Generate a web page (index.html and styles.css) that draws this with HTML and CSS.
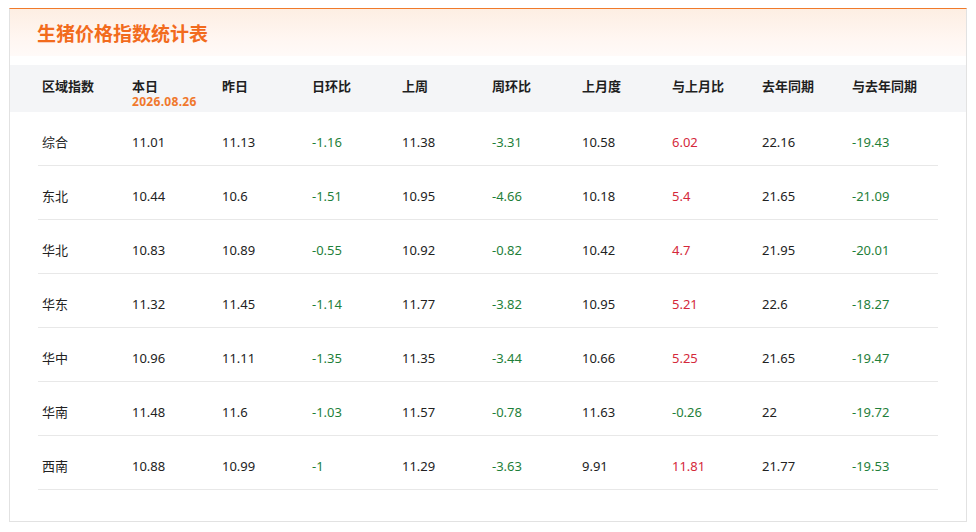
FILE: index.html
```html
<!DOCTYPE html>
<html lang="zh-CN">
<head>
<meta charset="utf-8">
<title>生猪价格指数统计表</title>
<link rel="stylesheet" href="styles.css">
</head>
<body>
<div class="card">
  <div class="card-head"><h1 class="title">生猪价格指数统计表</h1></div>
  <div class="thead">
    <div class="grid">
      <div class="th">区域指数</div>
      <div class="th">本日<div class="date">2026.08.26</div></div>
      <div class="th">昨日</div>
      <div class="th">日环比</div>
      <div class="th">上周</div>
      <div class="th">周环比</div>
      <div class="th">上月度</div>
      <div class="th">与上月比</div>
      <div class="th">去年同期</div>
      <div class="th">与去年同期</div>
    </div>
  </div>
  <div class="tbody">
    <div class="grid row"><div class="td">综合</div><div class="td">11.01</div><div class="td">11.13</div><div class="td down">-1.16</div><div class="td">11.38</div><div class="td down">-3.31</div><div class="td">10.58</div><div class="td up">6.02</div><div class="td">22.16</div><div class="td down">-19.43</div></div>
    <div class="grid row"><div class="td">东北</div><div class="td">10.44</div><div class="td">10.6</div><div class="td down">-1.51</div><div class="td">10.95</div><div class="td down">-4.66</div><div class="td">10.18</div><div class="td up">5.4</div><div class="td">21.65</div><div class="td down">-21.09</div></div>
    <div class="grid row"><div class="td">华北</div><div class="td">10.83</div><div class="td">10.89</div><div class="td down">-0.55</div><div class="td">10.92</div><div class="td down">-0.82</div><div class="td">10.42</div><div class="td up">4.7</div><div class="td">21.95</div><div class="td down">-20.01</div></div>
    <div class="grid row"><div class="td">华东</div><div class="td">11.32</div><div class="td">11.45</div><div class="td down">-1.14</div><div class="td">11.77</div><div class="td down">-3.82</div><div class="td">10.95</div><div class="td up">5.21</div><div class="td">22.6</div><div class="td down">-18.27</div></div>
    <div class="grid row"><div class="td">华中</div><div class="td">10.96</div><div class="td">11.11</div><div class="td down">-1.35</div><div class="td">11.35</div><div class="td down">-3.44</div><div class="td">10.66</div><div class="td up">5.25</div><div class="td">21.65</div><div class="td down">-19.47</div></div>
    <div class="grid row"><div class="td">华南</div><div class="td">11.48</div><div class="td">11.6</div><div class="td down">-1.03</div><div class="td">11.57</div><div class="td down">-0.78</div><div class="td">11.63</div><div class="td down">-0.26</div><div class="td">22</div><div class="td down">-19.72</div></div>
    <div class="grid row"><div class="td">西南</div><div class="td">10.88</div><div class="td">10.99</div><div class="td down">-1</div><div class="td">11.29</div><div class="td down">-3.63</div><div class="td">9.91</div><div class="td up">11.81</div><div class="td">21.77</div><div class="td down">-19.53</div></div>
  </div>
</div>
</body>
</html>
```
FILE: styles.css
```css
html, body {
  margin: 0;
  padding: 0;
  background: #ffffff;
}
body {
  font-family: "Noto Sans", "Noto Sans CJK SC", sans-serif;
  color: #222222;
  font-size: 13px;
}
.card {
  box-sizing: border-box;
  margin: 8px 0 0 9px;
  width: 958px;
  height: 514px;
  border: 1px solid #e2e2e2;
  border-top: 1px solid #f07a2a;
  background: #ffffff;
}
.card-head {
  height: 47px;
  display: flex;
  align-items: center;
  padding-left: 27px;
  background: linear-gradient(180deg, #fdeee3 0%, #fff6f1 60%, #fffaf8 100%);
  margin-bottom: 9px;
}
.title {
  margin: 0;
  font-size: 19px;
  font-weight: 700;
  color: #f26b1d;
  line-height: 24px;
  font-family: "Noto Sans CJK SC", sans-serif;
}
.thead {
  height: 47px;
  background: #f4f5f7;
  padding: 0 28px;
  box-sizing: border-box;
}
.grid {
  display: grid;
  grid-template-columns: repeat(10, 90px);
}
.th {
  padding: 14px 0 0 4px;
  font-weight: 700;
  line-height: 14px;
  font-size: 13px;
  color: #1f1f1f;
  font-family: "Noto Sans CJK SC", sans-serif;
}
.date {
  margin-top: 3px;
  font-size: 12px;
  line-height: 12px;
  color: #f0782c;
  font-weight: 700;
  font-family: "Noto Sans", sans-serif;
  letter-spacing: 0.3px;
}
.tbody {
  padding: 0 28px;
}
.row {
  height: 54px;
  box-sizing: border-box;
  border-bottom: 1px solid #e8e8e8;
}
.td {
  padding: 20px 0 0 4px;
  line-height: 20px;
  font-size: 13px;
}
.down {
  color: #1f7f3a;
}
.up {
  color: #d4283a;
}
```
